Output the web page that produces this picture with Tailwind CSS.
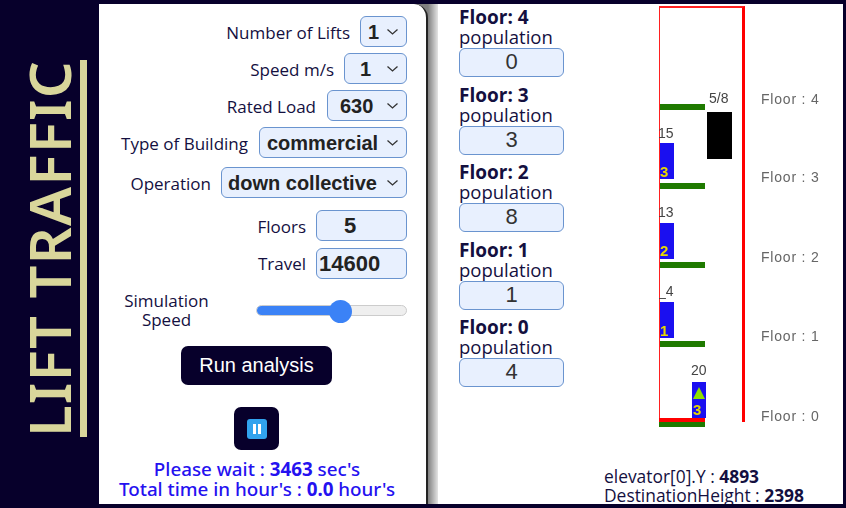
<!DOCTYPE html>
<html lang="en">
<head>
  <meta charset="UTF-8">
  <title>Lift Traffic</title>
  <script src="https://cdn.jsdelivr.net/npm/@tailwindcss/browser@4"></script>
</head>
<body class="w-[846px] h-[508px] overflow-hidden bg-[#07002b] flex pt-1 pb-1 pr-[3px] font-['Open_Sans','Noto_Sans',sans-serif] text-[#14103f]">

  <!-- Title -->
  <div class="w-[99px] shrink-0 flex justify-center items-start pt-[56px] pl-[8px]">
    <div class="[writing-mode:vertical-rl] rotate-180 border-l-[7px] border-[#d9d69b] pl-[3px] h-[377px] text-[#d9d69b] text-[58px] leading-[56px] tracking-[1.2px] font-semibold whitespace-nowrap flex items-center justify-center font-['Noto_Sans',sans-serif]">LIFT TRAFFIC</div>
  </div>

  <!-- Controls -->
  <div class="w-[329px] shrink-0 h-full bg-white rounded-tr-[14px] border-r-2 border-[#222] z-10 relative pr-[19px] text-[17px] flex flex-col">
    <div class="flex justify-end items-center gap-[10px] mt-[12px] h-[31px]">
      <span class="pt-[2px]">Number of Lifts</span>
      <div class="w-[47px] h-[31px] bg-[#e8f0fe] border border-[#6a94cf] rounded-[6px] flex items-center justify-between pl-[7px] pr-[7px] font-['Liberation_Sans',sans-serif] font-bold text-[#222] text-[20px]">1
        <svg class="w-[13px] h-[8px]" viewBox="0 0 13 8" fill="none" stroke="#333" stroke-width="1.3"><path d="M1.5 1.5 6.5 6 11.5 1.5"/></svg>
      </div>
    </div>
    <div class="flex justify-end items-center gap-[10px] mt-[6px] h-[31px]">
      <span class="pt-[2px]">Speed m/s</span>
      <div class="w-[63px] h-[31px] bg-[#e8f0fe] border border-[#6a94cf] rounded-[6px] flex items-center justify-between pl-[15px] pr-[7px] font-['Liberation_Sans',sans-serif] font-bold text-[#222] text-[20px]">1
        <svg class="w-[13px] h-[8px]" viewBox="0 0 13 8" fill="none" stroke="#333" stroke-width="1.3"><path d="M1.5 1.5 6.5 6 11.5 1.5"/></svg>
      </div>
    </div>
    <div class="flex justify-end items-center gap-[11px] mt-[6px] h-[31px]">
      <span class="pt-[2px]">Rated Load</span>
      <div class="w-[80px] h-[31px] bg-[#e8f0fe] border border-[#6a94cf] rounded-[6px] flex items-center justify-between pl-[12px] pr-[7px] font-['Liberation_Sans',sans-serif] font-bold text-[#222] text-[20px]">630
        <svg class="w-[13px] h-[8px]" viewBox="0 0 13 8" fill="none" stroke="#333" stroke-width="1.3"><path d="M1.5 1.5 6.5 6 11.5 1.5"/></svg>
      </div>
    </div>
    <div class="flex justify-end items-center gap-[11px] mt-[6px] h-[31px]">
      <span class="pt-[2px]">Type of Building</span>
      <div class="w-[148px] h-[31px] bg-[#e8f0fe] border border-[#6a94cf] rounded-[6px] flex items-center justify-between pl-[7px] pr-[7px] font-['Liberation_Sans',sans-serif] font-bold text-[#222] text-[20px]">commercial
        <svg class="w-[13px] h-[8px]" viewBox="0 0 13 8" fill="none" stroke="#333" stroke-width="1.3"><path d="M1.5 1.5 6.5 6 11.5 1.5"/></svg>
      </div>
    </div>
    <div class="flex justify-end items-center gap-[10px] mt-[9px] h-[31px]">
      <span class="pt-[2px]">Operation</span>
      <div class="w-[186px] h-[31px] bg-[#e8f0fe] border border-[#6a94cf] rounded-[6px] flex items-center justify-between pl-[6px] pr-[7px] font-['Liberation_Sans',sans-serif] font-bold text-[#222] text-[20px]">down collective
        <svg class="w-[13px] h-[8px]" viewBox="0 0 13 8" fill="none" stroke="#333" stroke-width="1.3"><path d="M1.5 1.5 6.5 6 11.5 1.5"/></svg>
      </div>
    </div>
    <div class="flex justify-end items-center gap-[10px] mt-[12px] h-[31px]">
      <span class="pt-[2px]">Floors</span>
      <div class="w-[91px] h-[31px] bg-[#e8f0fe] border border-[#6a94cf] rounded-[6px] flex items-center pl-[27px] font-['Liberation_Sans',sans-serif] font-bold text-[#222] text-[22px]">5</div>
    </div>
    <div class="flex justify-end items-center gap-[10px] mt-[7px] h-[31px]">
      <span>Travel</span>
      <div class="w-[91px] h-[31px] bg-[#e8f0fe] border border-[#6a94cf] rounded-[6px] flex items-center pl-[2px] font-['Liberation_Sans',sans-serif] font-bold text-[#222] text-[22px]">14600</div>
    </div>
    <div class="flex items-center mt-[11px] h-[40px]">
      <div class="w-[157px] text-center leading-[19px] pr-[22px]">Simulation<br>Speed</div>
      <div class="relative w-[151px] h-[11px] bg-[#efefef] border border-[#ccc] rounded-full">
        <div class="h-full w-[92px] bg-[#3b82f6] rounded-full"></div>
        <div class="absolute left-[72px] top-[-6px] w-[23px] h-[23px] bg-[#3b82f6] rounded-full"></div>
      </div>
    </div>
    <div class="self-start ml-[82px] mt-[16px] pb-[2px] w-[151px] h-[39px] bg-[#07002b] rounded-[7px] text-white text-[20px] font-['Liberation_Sans',sans-serif] flex items-center justify-center">Run analysis</div>
    <div class="self-start ml-[135px] mt-[22px] w-[45px] h-[43px] bg-[#07002b] rounded-[7px] flex items-center justify-center">
      <div class="w-[20px] h-[20px] bg-[#31a3ee] rounded-[3px] flex items-center justify-center gap-[2px]">
        <span class="w-[3px] h-[10px] bg-white"></span><span class="w-[3px] h-[10px] bg-white"></span>
      </div>
    </div>
    <div class="ml-[-1px] w-[318px] mt-[9px] text-center text-[#2511f0] text-[18.8px] leading-[20px] font-['Noto_Sans',sans-serif] font-medium">
      <div>Please wait : <b>3463</b> sec's</div>
      <div>Total time in hour's : <b>0.0</b> hour's</div>
    </div>
  </div>

  <!-- Shadow strip behind the panel edge -->
  <div class="w-[26px] ml-[-16px] shrink-0 h-full bg-[linear-gradient(to_right,#808080_0,#808080_16px,#e4e4e4_26px)]"></div>

  <!-- Floors and shaft -->
  <div class="flex-1 h-full bg-white relative overflow-hidden">
    <div class="absolute left-[21px] top-0 w-[105px]">
      <div class="h-[77.5px]">
        <div class="box-border h-[24px] pt-[1px] font-bold text-[19px] leading-[24px]">Floor: 4</div>
        <div class="text-[18.5px] leading-[18px]">population</div>
        <div class="mt-[2px] h-[29px] pb-[2px] bg-[#e8f0fe] border border-[#6a94cf] rounded-[6px] flex items-center justify-center font-['Liberation_Sans',sans-serif] text-[#333] text-[22px]">0</div>
      </div>
      <div class="h-[77.5px]">
        <div class="box-border h-[24px] pt-[1px] font-bold text-[19px] leading-[24px]">Floor: 3</div>
        <div class="text-[18.5px] leading-[18px]">population</div>
        <div class="mt-[2px] h-[29px] pb-[2px] bg-[#e8f0fe] border border-[#6a94cf] rounded-[6px] flex items-center justify-center font-['Liberation_Sans',sans-serif] text-[#333] text-[22px]">3</div>
      </div>
      <div class="h-[77.5px]">
        <div class="box-border h-[24px] pt-[1px] font-bold text-[19px] leading-[24px]">Floor: 2</div>
        <div class="text-[18.5px] leading-[18px]">population</div>
        <div class="mt-[2px] h-[29px] pb-[2px] bg-[#e8f0fe] border border-[#6a94cf] rounded-[6px] flex items-center justify-center font-['Liberation_Sans',sans-serif] text-[#333] text-[22px]">8</div>
      </div>
      <div class="h-[77.5px]">
        <div class="box-border h-[24px] pt-[1px] font-bold text-[19px] leading-[24px]">Floor: 1</div>
        <div class="text-[18.5px] leading-[18px]">population</div>
        <div class="mt-[2px] h-[29px] pb-[2px] bg-[#e8f0fe] border border-[#6a94cf] rounded-[6px] flex items-center justify-center font-['Liberation_Sans',sans-serif] text-[#333] text-[22px]">1</div>
      </div>
      <div class="h-[77.5px]">
        <div class="box-border h-[24px] pt-[1px] font-bold text-[19px] leading-[24px]">Floor: 0</div>
        <div class="text-[18.5px] leading-[18px]">population</div>
        <div class="mt-[2px] h-[29px] pb-[2px] bg-[#e8f0fe] border border-[#6a94cf] rounded-[6px] flex items-center justify-center font-['Liberation_Sans',sans-serif] text-[#333] text-[22px]">4</div>
      </div>
    </div>

    <!-- Simulation canvas: everything here sits at its drawn coordinates -->
    <div class="absolute left-[221px] top-[2px] w-[186px] h-[424px] overflow-hidden font-['Liberation_Sans',sans-serif] text-[14px] leading-[14px] text-[#444] blur-[0.4px]">
      <div class="absolute left-0 top-0 w-[86px] h-[416px] border-t-2 border-l border-[#ff2020] border-r-[3px] border-r-[#f00] border-b-0"></div>
      <div class="absolute left-[1px] top-[98px] w-[45px] h-[6px] bg-[#1f7a00]"></div>
      <div class="absolute left-[1px] top-[177px] w-[45px] h-[6px] bg-[#1f7a00]"></div>
      <div class="absolute left-[1px] top-[256px] w-[45px] h-[6px] bg-[#1f7a00]"></div>
      <div class="absolute left-[1px] top-[335px] w-[45px] h-[6px] bg-[#1f7a00]"></div>
      <div class="absolute left-0 top-[416px] w-[46px] h-[5px] bg-[#1f7a00]"></div>
      <div class="absolute left-0 top-[412px] w-[46px] h-[4px] bg-[#f00]"></div>

      <span class="absolute left-[50px] top-[85px]">5/8</span>
      <div class="absolute left-[48px] top-[106px] w-[25px] h-[47px] bg-black"></div>

      <span class="absolute left-[-1px] top-[120px]">15</span>
      <div class="absolute left-[1px] top-[137px] w-[14px] h-[36px] bg-[#1a0ff0]"></div>
      <b class="absolute left-[1px] top-[159px] text-[#e6d800] text-[15px]">3</b>
      <span class="absolute left-[-1px] top-[199px]">13</span>
      <div class="absolute left-[1px] top-[217px] w-[14px] h-[36px] bg-[#1a0ff0]"></div>
      <b class="absolute left-[1px] top-[238px] text-[#e6d800] text-[15px]">2</b>
      <span class="absolute left-[-1px] top-[278px]">_4</span>
      <div class="absolute left-[1px] top-[296px] w-[14px] h-[36px] bg-[#1a0ff0]"></div>
      <b class="absolute left-[1px] top-[318px] text-[#e6d800] text-[15px]">1</b>

      <span class="absolute left-[32px] top-[357px]">20</span>
      <div class="absolute left-[33px] top-[376px] w-[14px] h-[36px] bg-[#1a0ff0]"></div>
      <svg class="absolute left-[33px] top-[381px] w-[14px] h-[12px]" viewBox="0 0 14 12"><path d="M7 0 13 12H1Z" fill="#8fe000"/></svg>
      <b class="absolute left-[34px] top-[397px] text-[#e6d800] text-[15px]">3</b>

      <span class="absolute left-[102px] top-[86px] tracking-[0.8px] text-[#666]">Floor : 4</span>
      <span class="absolute left-[102px] top-[164px] tracking-[0.8px] text-[#666]">Floor : 3</span>
      <span class="absolute left-[102px] top-[244px] tracking-[0.8px] text-[#666]">Floor : 2</span>
      <span class="absolute left-[102px] top-[323px] tracking-[0.8px] text-[#666]">Floor : 1</span>
      <span class="absolute left-[102px] top-[403px] tracking-[0.8px] text-[#666]">Floor : 0</span>
    </div>

    <div class="absolute left-[166px] top-[463px] text-[17.4px] leading-[19px] whitespace-nowrap">
      <div>elevator[0].Y : <b>4893</b></div>
      <div>DestinationHeight : <b>2398</b></div>
    </div>
  </div>
</body>
</html>
